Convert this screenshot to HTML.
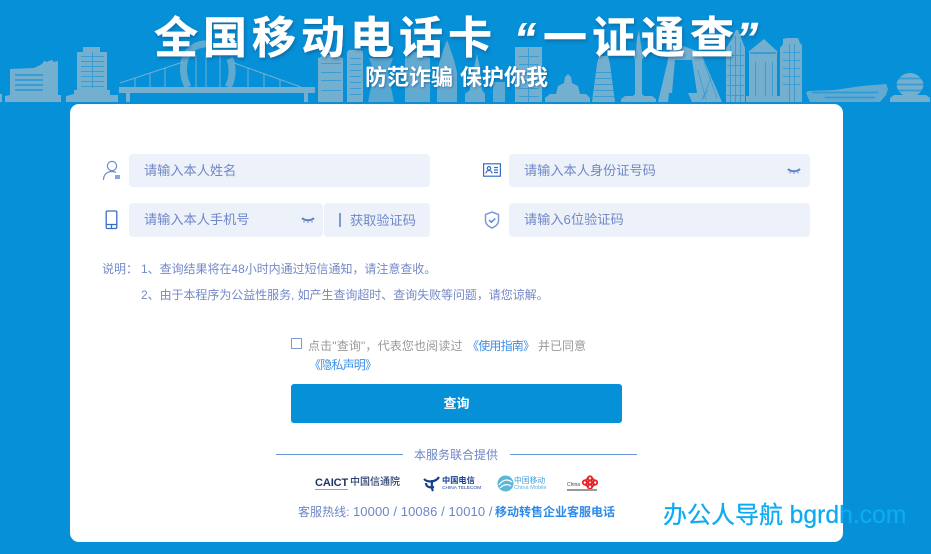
<!DOCTYPE html>
<html lang="zh"><head><meta charset="utf-8"><style>
html,body{margin:0;padding:0}
body{width:931px;height:554px;overflow:hidden;background:#0690d8;position:relative;font-family:"Liberation Sans","Noto Sans CJK SC",sans-serif}
.a{position:absolute;white-space:nowrap}
.i{position:absolute;background:#edf1f9;border-radius:4px}
.t{position:absolute;font-size:13.2px;line-height:20px;color:#7088c8;white-space:nowrap}
.s{color:#7489c8;font-size:12px;line-height:16px}
.h{position:absolute;top:11px;font-size:44px;line-height:56px;font-weight:700;color:#fff;white-space:nowrap;letter-spacing:5px;-webkit-text-stroke:.4px #fff;text-shadow:1px 2px 3px rgba(30,70,110,.55)}
svg{position:absolute}
</style></head><body>
<svg style="left:0;top:0" width="931" height="104" viewBox="0 0 931 104">
<g fill="#74afd0">
<path d="M0 94h2v8H0zM5 102v-6l5-1V69l24-1 8-4 2-3 4 1v-1l5-1v2l5-1v34h3v7z"/>
<path d="M66 102v-6l8-2v-4h3V52h6v-5h17v5h7v38h3v5h8v7z"/>
<path d="M119 87h196v6H119zM126 93h4v9h-4zM304 93h4v9h-4z"/>
<path d="M318 102V58l3-1v-2h19v2l3 1v44zM347 102V52l2-2h12l2 2v50z"/>
<path d="M368 102l6-30-5-14h24l-5 14 6 30z" opacity=".75"/>
<path d="M405 102V58l4-2 4-4h9l3 4 5 2v44z" opacity=".85"/>
<path d="M437 102V72l3-12 4-12 3-8 3 8 4 12 3 12v30z" opacity=".85"/>
<path d="M465 102v-8l5-4 1-14 3-8 3-14 3 14 2 22 3 4v8z" opacity=".9"/>
<path d="M493 102V82h12v20z" opacity=".8"/>
<path d="M515 102V47h27v55z"/>
<path d="M545 102v-4l5-4h6l2-8 6-3 1-6 3-3 3 3 1 6 6 3 2 8h6l4 4v4z"/>
<path d="M593 102l5-38 2-8h9l2 8 5 38z" transform="translate(-1)"/>
<path d="M621 102v-3l4-3h8l2-2V60l-2-4 3-4 1-14 2-8 1 8 2 14 2 4-2 4v34l2 2h8l4 3v3z"/>
<path d="M658 102l9-38 3-16 10-3 17 6 6 7 19 44h-30l-4-9h-19l-1 9z"/>
<path d="M726 102V48l4-6 6-12 2 0 7 18v54z"/>
<path d="M746 102v-6h3V52h-1l16-13 14 13h-1v44h4v6z"/>
<path d="M780 102V48l3-4v-5l4-1h11l2 5 2 2v57z"/>
<path d="M806 93l2-2 26-1 28-4 24-2 2 5-2 6-6 7h-70z" opacity=".85"/>
<path d="M890 102v-4l4-3h9c-6-4-8-10-5-15 3-5 8-7 12-7s9 2 12 7c3 5 1 11-5 15h9l4 3v4z"/>
</g>
<g fill="none" stroke="#74afd0" stroke-width="1">
<path d="M120 83l63-21M234 63l67 24M135 78v9M150 73v14M165 68v19M248 68v19M264 73v14M280 79v8M196 55v32M206 52v35M220 54v33"/>
</g>
<path d="M188 87c-9-18-4-38 11-42 14-4 27 3 32 17 2 9 1 18-3 25" fill="none" stroke="#7fb3cd" stroke-width="7" opacity=".75" stroke-dasharray="58 28 70"/>
<g fill="#0690d8" opacity=".55">
<path d="M15 74h28v2H15zM15 79h28v2H15zM15 84h28v2H15zM15 89h28v2H15zM81 56h23v1H81zM81 61h23v1H81zM81 66h23v1H81zM81 71h23v1H81zM81 76h23v1H81zM81 81h23v1H81zM81 86h23v1H81zM92 52h1v36h-1z"/>
<path d="M321 63h20v1h-20zM321 72h20v1h-20zM321 80h20v1h-20zM321 90h20v1h-20zM350 58h11v1h-11zM350 64h11v1h-11zM350 70h11v1h-11zM350 76h11v1h-11zM350 82h11v1h-11zM350 88h11v1h-11zM350 94h11v1h-11z"/>
<path d="M519 56h20v1h-20zM519 64h20v1h-20zM519 72h20v1h-20zM519 80h20v1h-20zM519 88h20v1h-20zM519 96h20v1h-20zM528 48h1v54h-1z"/>
<path d="M595 72h20v1h-20zM595 78h20v1h-20zM595 84h20v1h-20zM594 90h22v1h-22zM594 96h22v1h-22z"/>
<path d="M730 45h1v57h-1zM735 36h1v66h-1zM740 42h1v60h-1zM727 55h17v1h-17zM727 65h17v1h-17zM727 75h17v1h-17zM727 85h17v1h-17zM727 95h17v1h-17zM755 62h1v34h-1zM765 62h1v34h-1zM772 62h1v34h-1zM750 52h26v2h-26zM789 44h1v58h-1zM794 44h1v58h-1zM783 52h17v1h-17zM783 60h17v1h-17zM783 68h17v1h-17zM783 76h17v1h-17zM783 84h17v1h-17z"/>
<path d="M704 62l13 36M698 70l8 30M714 70l-12 30M708 90l-6 10M812 92h66v1h-66zM825 97h50v1h-50zM895 84h30v1h-30zM895 78h30v1h-30zM897 90h26v1h-26z" stroke="#0690d8" stroke-width=".8"/>
</g>
<path d="M672 93l3-33h17l5 33z" fill="#0690d8"/>
</svg>

<div class="h" style="left:154px">全国移动电话卡</div>
<div class="h" style="left:514px;font-family:'Liberation Sans',sans-serif;font-style:italic;letter-spacing:0">“</div>
<div class="h" style="left:543px">一证通查</div>
<div class="h" style="left:736px;font-family:'Liberation Sans',sans-serif;font-style:italic;letter-spacing:0">”</div>
<div class="a" style="left:365px;top:63px;font-size:22px;line-height:30px;font-weight:700;color:#fff;text-shadow:1px 1px 2px rgba(30,70,110,.5)">防范诈骗<span style="margin-left:7px">保护你我</span></div>

<div class="a" style="left:70px;top:104px;width:773px;height:438px;background:#fff;border-radius:9px"></div>

<svg style="left:102px;top:160px" width="19" height="21" viewBox="0 0 19 21" fill="none" stroke="#6a8bcf" stroke-width="1.200"><circle cx="10" cy="6" r="4.600"/><path d="M1.500 20c0-5 3-8.500 8.500-8.500 1.800 0 3 .4 4 1"/><rect x="13" y="15" width="5" height="4" fill="#8aa5d8" stroke="none"/></svg>
<div class="i" style="left:129px;top:154px;width:301px;height:33px"></div>
<div class="t" style="left:144px;top:161px">请输入本人姓名</div>

<svg style="left:105px;top:210px" width="13" height="20" viewBox="0 0 13 20" fill="none" stroke="#3a6cc6" stroke-width="1.300"><rect x="1.200" y="1" width="10.600" height="17.500" rx="1.200"/><path d="M1.200 14.500h10.600M6.500 14.500v4"/></svg>
<div class="i" style="left:129px;top:203px;width:194px;height:34px"></div>
<div class="i" style="left:324px;top:203px;width:106px;height:34px"></div>
<div class="t" style="left:144px;top:210px">请输入本人手机号</div>
<svg style="left:301px;top:216px" width="14" height="8" viewBox="0 0 14 8" fill="none" stroke="#5f83c9" stroke-width="2"><path d="M1 2c3 3 9 3 12 0"/><path d="M3 5v1.500M7 5.500v1.500M11 5v1.500" stroke-width="1"/></svg>
<div class="a" style="left:339px;top:213px;width:1.500px;height:14px;background:#7b9ad6"></div>
<div class="t" style="left:350px;top:211px">获取验证码</div>

<svg style="left:483px;top:163px" width="18" height="14" viewBox="0 0 18 14" fill="none" stroke="#3a6cc6" stroke-width="1.200"><rect x=".6" y=".8" width="16.800" height="12.400"/><circle cx="6" cy="5.300" r="1.700"/><path d="M3 10.500c0-4 6-4 6 0M11 4.500h4M11 7h4M11 9.500h4"/></svg>
<div class="i" style="left:509px;top:154px;width:301px;height:33px"></div>
<div class="t" style="left:524px;top:161px">请输入本人身份证号码</div>
<svg style="left:787px;top:167px" width="14" height="8" viewBox="0 0 14 8" fill="none" stroke="#5f83c9" stroke-width="2"><path d="M1 2c3 3 9 3 12 0"/><path d="M3 5v1.500M7 5.500v1.500M11 5v1.500" stroke-width="1"/></svg>

<svg style="left:484px;top:211px" width="16" height="18" viewBox="0 0 16 18" fill="none" stroke="#7b9bd8" stroke-width="1.500"><path d="M8 1l6.500 2.500v6c0 3.500-3 6-6.500 7.500-3.500-1.500-6.500-4-6.500-7.500v-6z"/><path d="M5 9l2.300 2.200 4-3.700" stroke="#5f83c9"/></svg>
<div class="i" style="left:509px;top:203px;width:301px;height:34px"></div>
<div class="t" style="left:524px;top:210px">请输入6位验证码</div>

<div class="a s" style="left:102px;top:261px">说明：</div>
<div class="a s" style="left:141px;top:261px;letter-spacing:-.03px">1、查询结果将在48小时内通过短信通知，请注意查收。</div>
<div class="a s" style="left:141px;top:287px;letter-spacing:-.05px">2、由于本程序为公益性服务, 如产生查询超时、查询失败等问题，请您谅解。</div>

<div class="a" style="left:291px;top:338px;width:9px;height:9px;border:1px solid #7f98d6"></div>
<div class="a" style="left:308px;top:338px;font-size:12px;line-height:16px;color:#999;letter-spacing:.15px">点击"查询"，代表您也阅读过</div>
<div class="a" style="left:467px;top:338px;font-size:12px;line-height:16px;color:#3d8fe8;letter-spacing:-.8px">《使用指南》</div>
<div class="a" style="left:538px;top:338px;font-size:12px;line-height:16px;color:#999">并已同意</div>
<div class="a" style="left:309px;top:357px;font-size:12px;line-height:16px;color:#3d8fe8;letter-spacing:-.8px">《隐私声明》</div>

<div class="a" style="left:291px;top:384px;width:331px;height:39px;background:#0690d8;border-radius:3px;color:#fff;font-size:13px;font-weight:700;line-height:39px;text-align:center">查询</div>

<div class="a" style="left:276px;top:454px;width:127px;height:1px;background:#6b92dc"></div>
<div class="a" style="left:510px;top:454px;width:127px;height:1px;background:#6b92dc"></div>
<div class="a" style="left:414px;top:447px;font-size:12px;line-height:16px;color:#6e86c6">本服务联合提供</div>

<div class="a" style="left:315px;top:476px;font-size:11px;line-height:14px;font-weight:700;color:#1f3566;letter-spacing:-.1px">CAICT<span style="position:absolute;left:35px;font-size:10px;letter-spacing:0;font-weight:500;color:#2c3f70">中国信通院</span></div>
<div class="a" style="left:315px;top:489px;width:33px;height:1px;background:#e8923a"></div>

<svg style="left:423px;top:475px" width="18" height="17" viewBox="0 0 18 17" fill="none" stroke="#17408f" stroke-width="2.200"><path d="M1 4c4 4 12 3 15-2"/><path d="M9 5c0 4-1 8 1 11M3 8c0 4 4 5 8 4"/></svg>
<div class="a" style="left:442px;top:476px;font-size:8.200px;line-height:10px;color:#17408f;font-weight:700">中国电信</div>
<div class="a" style="left:442px;top:486px;font-size:4.800px;line-height:6px;color:#17408f">CHINA TELECOM</div>

<svg style="left:497px;top:475px" width="17" height="17" viewBox="0 0 17 17"><circle cx="8.500" cy="8.500" r="8" fill="#5fb7d8"/><path d="M2 10c4-6 9-6 13-3M3 13c4-4 8-4 11-2" stroke="#fff" stroke-width="1.200" fill="none"/></svg>
<div class="a" style="left:514px;top:476px;font-size:7.800px;line-height:10px;color:#3f9fd8">中国移动</div>
<div class="a" style="left:514px;top:485px;font-size:5.600px;line-height:7px;color:#5fb2de">China Mobile</div>

<svg style="left:581px;top:475px" width="18" height="15" viewBox="0 0 18 15" fill="none" stroke="#e5252a" stroke-width="1.800"><circle cx="4" cy="7.500" r="2.200"/><circle cx="9" cy="3.500" r="2.200"/><circle cx="14" cy="7.500" r="2.200"/><circle cx="9" cy="11.500" r="2.200"/><circle cx="6.500" cy="5.500" r="1.500"/><circle cx="11.500" cy="5.500" r="1.500"/><circle cx="6.500" cy="9.500" r="1.500"/><circle cx="11.500" cy="9.500" r="1.500"/></svg>
<div class="a" style="left:567px;top:483px;font-size:5px;line-height:5px;color:#444">China</div>
<div class="a" style="left:567px;top:489px;width:30px;height:2px;background:#999"></div>

<div class="a" style="left:298px;top:504px;font-size:12px;line-height:16px;color:#6e86c6;letter-spacing:.05px">客服热线: <span style="font-size:13px;letter-spacing:.1px">10000 / 10086 / 10010 /</span></div>
<div class="a" style="left:495px;top:504px;font-size:12px;line-height:16px;color:#2d8be8;font-weight:700">移动转售企业客服电话</div>

<div class="a" style="left:663px;top:500px;font-size:24px;line-height:32px;color:#0cabf2;-webkit-text-stroke:.25px #0cabf2">办公人导航 <span style="font-size:24.700px">bgrdh.com</span></div>
</body></html>
